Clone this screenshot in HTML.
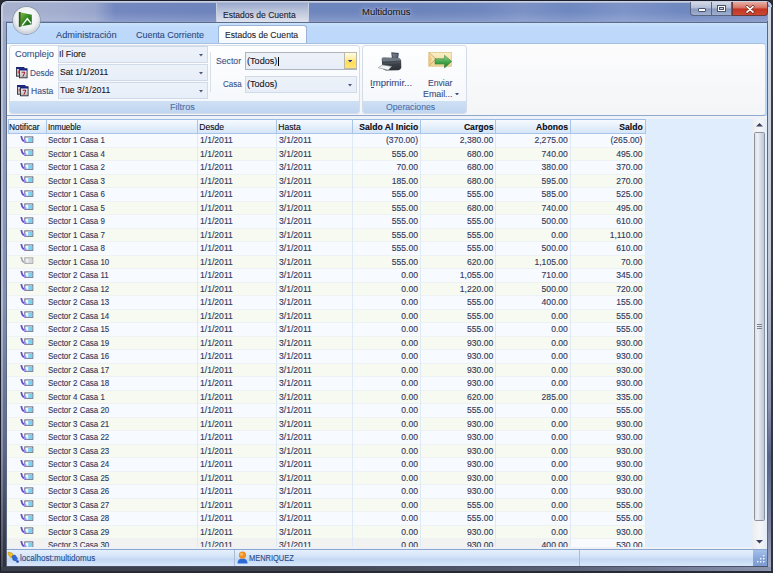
<!DOCTYPE html>
<html><head><meta charset="utf-8">
<style>
*{margin:0;padding:0;box-sizing:border-box}
html,body{width:773px;height:573px;overflow:hidden;background:#2c2e36}
body{position:relative;font-family:"Liberation Sans",sans-serif}
.a{position:absolute}
.t{-webkit-text-stroke:0.1px currentColor;position:absolute;white-space:nowrap;line-height:1;transform-origin:0 0}
.gt{-webkit-text-stroke:0.12px currentColor;position:absolute;white-space:nowrap;font-size:8.6px;color:#30385a;line-height:13.5px;height:13.5px}
.sx{transform:scaleX(0.922);transform-origin:0 0}
.r{text-align:right}
</style></head><body>

<div class="a" style="left:0;top:0;width:773px;height:573px;background:#1a1d2c;border-radius:7px 7px 0 0"></div>
<div class="a" style="left:1px;top:1px;width:771px;height:571px;border-radius:6px 6px 0 0;background:linear-gradient(180deg,#c8d0e2 0px,#bcc6dc 60px,#aebcd4 300px,#8890a8 450px,#5a5e6c 540px,#44474f 573px)"></div>
<div class="a" style="left:3px;top:3px;width:767px;height:568px;border-radius:5px 5px 0 0;background:linear-gradient(180deg,#a0acd0 0px,#98a6c8 40px,#8090b0 300px,#5a6488 450px,#383c48 540px,#2c2e36 573px)"></div>
<div class="a" style="left:3px;top:3px;width:767px;height:18px;border-radius:5px 5px 0 0;background:linear-gradient(90deg,#a8b2ce 0px,#a2acce 60px,#98a6cc 92px,#7488c0 112px,#6e84bc 200px,#6e86be 330px,#6c84bc 420px,#7088c0 480px,#7c92c6 520px,#6e88c0 565px,#7e94c8 620px,#6e88c0 680px,#7a8cc0 767px)"></div>
<div class="a" style="left:3px;top:2px;width:767px;height:1px;background:#aab4d0;opacity:0.7"></div>
<div class="a" style="left:6px;top:21px;width:762px;height:546px;background:#5c6884;border-top:1px solid #8e9ec8"></div>
<div class="a" style="left:771px;top:7px;width:2px;height:566px;background:linear-gradient(180deg,#3a3e50 0%,#30343e 100%)"></div>
<div class="a" style="left:768px;top:7px;width:3px;height:566px;background:linear-gradient(180deg,#d4d8e2 0px,#c4cad6 250px,#8a92ac 400px,#5a6488 450px,#7a84a0 520px,#a0a8c0 560px)"></div>
<div class="a" style="left:767px;top:21px;width:1px;height:546px;background:#5c6680"></div>
<div class="a" style="left:3px;top:12px;width:765px;height:9px;background:linear-gradient(180deg,rgba(200,210,235,0) 0%,rgba(200,210,235,0.25) 100%)"></div>
<div class="a" style="left:216px;top:3px;width:93px;height:19px;background:linear-gradient(180deg,#9aa8cc 0%,#bcc6dc 45%,#dde2ec 100%);border-left:1px solid #c8d0e0;border-right:1px solid #c8d0e0"></div>
<div class="t" style="left:223.12px;top:11px;font-size:8.8px;color:#1a2030;transform:scaleX(0.972);">Estados de Cuenta</div>
<div class="t" style="left:361.94px;top:7px;font-size:9.8px;color:#141620;transform:scaleX(0.969);text-shadow:0 0 5px rgba(230,236,250,0.8),0 0 2px rgba(230,236,250,0.6);">Multidomus</div>
<div class="a" style="left:690px;top:2px;width:42px;height:14px;border:1px solid #5a6480;border-top:none;border-radius:0 0 0 4px;background:linear-gradient(180deg,#d4dae6 0%,#b4c0d8 42%,#8a9ac0 55%,#a0b0d0 100%)"></div>
<div class="a" style="left:711px;top:2px;width:1px;height:13px;background:#5a6480"></div>
<div class="a" style="left:697.5px;top:8px;width:8.5px;height:3.6px;background:#fff;border:1px solid #4a5270;border-radius:1px"></div>
<div class="a" style="left:717px;top:5px;width:9px;height:7px;border:1px solid #4a5270;background:#fff"></div>
<div class="a" style="left:719px;top:7px;width:5px;height:3px;border:1px solid #4a5270;background:#c8d0e0"></div>
<div class="a" style="left:732px;top:2px;width:36px;height:14px;border:1px solid #6a3a3a;border-top:none;border-radius:0 0 4px 0;background:linear-gradient(180deg,#e8aca4 0%,#d87868 42%,#c43424 55%,#cc4a34 100%)"></div>
<svg class="a" style="left:745px;top:4.5px" width="10" height="9" viewBox="0 0 10 9"><path d="M2 1.6 L8 7.2 M8 1.6 L2 7.2" stroke="#5a2018" stroke-width="2.8" stroke-linecap="round"/><path d="M2 1.6 L8 7.2 M8 1.6 L2 7.2" stroke="#fff" stroke-width="1.7" stroke-linecap="round"/></svg>

<div class="a" style="left:7px;top:22px;width:760px;height:21px;background:linear-gradient(180deg,#cce4fc 0px,#c8e2fc 2px,#bed9fa 5px,#bcd8fa 100%)"></div>
<div class="a" style="left:6px;top:22px;width:762px;height:1px;background:#5e6a8a"></div>
<div class="a" style="left:217.5px;top:25px;width:89.5px;height:19px;border:1px solid #9ab4d8;border-bottom:none;border-radius:3px 3px 0 0;background:linear-gradient(180deg,#ffffff 0%,#f6f9fd 100%)"></div>
<div class="t" style="left:225.01px;top:31px;font-size:9.2px;color:#1e1e30;transform:scaleX(0.935);">Estados de Cuenta</div>
<div class="t" style="left:56.00px;top:30px;font-size:9.6px;color:#2c4a80;transform:scaleX(0.963);">Administración</div>
<div class="t" style="left:136.35px;top:30px;font-size:9.6px;color:#2c4a80;transform:scaleX(0.931);">Cuenta Corriente</div>
<div class="a" style="left:7px;top:43px;width:760px;height:74px;background:#bcd8fa"></div>
<div class="a" style="left:7px;top:43px;width:759px;height:73.3px;background:linear-gradient(180deg,#fcfcfd 0%,#f4f5f7 100%);border-top:1px solid #a8c0e0;border-right:1px solid #bcd2ee;border-bottom:1.5px solid #8fa8cc;border-radius:0 3px 3px 0"></div>
<div class="a" style="left:8.5px;top:44.5px;width:351px;height:69px;border:1px solid #d4dcea;border-radius:3px;background:linear-gradient(180deg,#fdfeff 0%,#f4f7fb 100%)"></div>
<div class="a" style="left:9.5px;top:100.5px;width:349px;height:12.5px;background:linear-gradient(180deg,#cfe0f4 0%,#c0d6f0 100%);border-radius:0 0 2px 2px"></div>
<div class="t" style="left:169.77px;top:103px;font-size:9.2px;color:#4a70aa;transform:scaleX(0.989);">Filtros</div>
<div class="a" style="left:362px;top:44.5px;width:105px;height:69px;border:1px solid #d4dcea;border-radius:3px;background:linear-gradient(180deg,#fdfeff 0%,#f4f7fb 100%)"></div>
<div class="a" style="left:363px;top:100.5px;width:103px;height:12.5px;background:linear-gradient(180deg,#cfe0f4 0%,#c0d6f0 100%);border-radius:0 0 2px 2px"></div>
<div class="t" style="left:386.31px;top:103px;font-size:9.2px;color:#4a70aa;transform:scaleX(0.943);">Operaciones</div>
<div class="t" style="left:15.04px;top:50px;font-size:9.2px;color:#3a5284;transform:scaleX(1.002);">Complejo</div>
<div class="t" style="left:30.04px;top:69px;font-size:9.2px;color:#3a5284;transform:scaleX(0.900);">Desde</div>
<div class="t" style="left:31.31px;top:87px;font-size:9.2px;color:#3a5284;transform:scaleX(0.932);">Hasta</div>
<svg class="a" style="left:16px;top:66.8px" width="12" height="12" viewBox="0 0 12 12">
<defs><linearGradient id="cg" x1="0" y1="0" x2="0" y2="1"><stop offset="0" stop-color="#ffffff"/><stop offset="1" stop-color="#b8b8b8"/></linearGradient></defs>
<rect x="0.5" y="0.5" width="7.5" height="8.7" fill="url(#cg)" stroke="#303038" stroke-width="0.9"/>
<rect x="0.5" y="0.2" width="7.5" height="2" fill="#14208a"/>
<path d="M2.2 3.5 L2.2 6.5" stroke="#c02020" stroke-width="1"/>
<rect x="3.5" y="1.8" width="7.6" height="9" fill="url(#cg)" stroke="#303038" stroke-width="0.9"/>
<rect x="3.5" y="1.5" width="7.6" height="2" fill="#14208a"/>
<path d="M5.6 5.2 L8.9 5.2 L6.9 9.6" stroke="#a01420" stroke-width="1" fill="none"/>
</svg>
<svg class="a" style="left:17.3px;top:85px" width="12" height="12" viewBox="0 0 12 12">
<defs><linearGradient id="cg" x1="0" y1="0" x2="0" y2="1"><stop offset="0" stop-color="#ffffff"/><stop offset="1" stop-color="#b8b8b8"/></linearGradient></defs>
<rect x="0.5" y="0.5" width="7.5" height="8.7" fill="url(#cg)" stroke="#303038" stroke-width="0.9"/>
<rect x="0.5" y="0.2" width="7.5" height="2" fill="#14208a"/>
<path d="M2.2 3.5 L2.2 6.5" stroke="#c02020" stroke-width="1"/>
<rect x="3.5" y="1.8" width="7.6" height="9" fill="url(#cg)" stroke="#303038" stroke-width="0.9"/>
<rect x="3.5" y="1.5" width="7.6" height="2" fill="#14208a"/>
<path d="M5.6 5.2 L8.9 5.2 L6.9 9.6" stroke="#a01420" stroke-width="1" fill="none"/>
</svg>
<div class="a" style="left:57.8px;top:46px;width:150.2px;height:17.2px;border:1px solid #d0dae8;background:linear-gradient(180deg,#edf2f9 0%,#e8eef8 100%)"></div><svg class="a" style="left:198.5px;top:54.1px" width="4" height="2.5" viewBox="0 0 4 2.5"><path d="M0 0 L4 0 L2 2.5 Z" fill="#4a5a7a"/></svg>
<div class="a" style="left:57.8px;top:64.2px;width:150.2px;height:17.2px;border:1px solid #d0dae8;background:linear-gradient(180deg,#edf2f9 0%,#e8eef8 100%)"></div><svg class="a" style="left:198.5px;top:72.3px" width="4" height="2.5" viewBox="0 0 4 2.5"><path d="M0 0 L4 0 L2 2.5 Z" fill="#4a5a7a"/></svg>
<div class="a" style="left:57.8px;top:82.3px;width:150.2px;height:17.2px;border:1px solid #d0dae8;background:linear-gradient(180deg,#edf2f9 0%,#e8eef8 100%)"></div><svg class="a" style="left:198.5px;top:90.39999999999999px" width="4" height="2.5" viewBox="0 0 4 2.5"><path d="M0 0 L4 0 L2 2.5 Z" fill="#4a5a7a"/></svg>
<div class="t" style="left:59.30px;top:50px;font-size:9.2px;color:#16161e;transform:scaleX(0.960);">Il Fiore</div>
<div class="t" style="left:59.71px;top:68px;font-size:9.2px;color:#16161e;transform:scaleX(0.938);">Sat 1/1/2011</div>
<div class="t" style="left:60.43px;top:86px;font-size:9.2px;color:#16161e;transform:scaleX(0.949);">Tue 3/1/2011</div>
<div class="a" style="left:210px;top:52px;width:1px;height:40px;background:#d8e0ea"></div>
<div class="t" style="left:216.41px;top:57px;font-size:9.2px;color:#3a5284;transform:scaleX(0.943);">Sector</div>
<div class="t" style="left:222.70px;top:80px;font-size:9.2px;color:#3a5284;transform:scaleX(0.866);">Casa</div>
<div class="a" style="left:245.3px;top:51.8px;width:112px;height:17.9px;border:1px solid #b0b4bc;background:linear-gradient(180deg,#edf2f9 0%,#e8eef8 100%)"></div><div class="a" style="left:344.0px;top:52.3px;width:12.8px;height:16.9px;border:1px solid #bcb8a8;background:linear-gradient(180deg,#fffce6 0%,#fff0b0 35%,#ffdc58 60%,#ffe47a 100%)"></div><svg class="a" style="left:348.0px;top:59.85px" width="4.2" height="2.6" viewBox="0 0 4.2 2.6"><path d="M0 0 L4.2 0 L2.1 2.6 Z" fill="#2a3a8a"/></svg>
<div class="a" style="left:245.3px;top:75.7px;width:112px;height:17.7px;border:1px solid #d0dae8;background:linear-gradient(180deg,#edf2f9 0%,#e8eef8 100%)"></div><svg class="a" style="left:347.8px;top:84.05px" width="4" height="2.5" viewBox="0 0 4 2.5"><path d="M0 0 L4 0 L2 2.5 Z" fill="#4a5a7a"/></svg>
<div class="t" style="left:247.25px;top:57px;font-size:9.2px;color:#16161e;transform:scaleX(0.992);">(Todos)</div>
<div class="t" style="left:247.25px;top:80px;font-size:9.2px;color:#16161e;transform:scaleX(0.989);">(Todos)</div>
<div class="a" style="left:278.1px;top:56.6px;width:0.9px;height:9.1px;background:#000"></div>
<svg class="a" style="left:374px;top:48px" width="30" height="26" viewBox="0 0 30 26">
<defs><linearGradient id="pb" x1="0" y1="0" x2="0" y2="1"><stop offset="0" stop-color="#50585f"/><stop offset="0.5" stop-color="#3a4048"/><stop offset="1" stop-color="#2c3036"/></linearGradient>
<linearGradient id="ph" x1="0" y1="0" x2="1" y2="1"><stop offset="0" stop-color="#7a8898"/><stop offset="1" stop-color="#4a5664"/></linearGradient></defs>
<path d="M17.3 4.3 L24.8 5 L24 12 L18 11.5 Z" fill="#3e4650"/>
<path d="M18.3 5.4 L23.8 6 L23.2 10.8 L18.9 10.4 Z" fill="url(#ph)"/>
<path d="M7.7 10.8 Q8 9.7 9.6 9.6 L24 9.9 Q26.6 10.3 27.1 12.6 L27.3 19.5 Q27 21.8 24.5 22.3 L12 22.4 Q9 22.1 8.3 19 Z" fill="url(#pb)"/>
<path d="M7.8 10.9 Q8.1 9.8 9.6 9.7 L24 10 Q26.4 10.3 26.9 12.4 L9 13.6 Z" fill="#6e7782"/>
<path d="M9.5 15.5 L26 14.6" stroke="#58606a" stroke-width="0.6"/>
<path d="M4.3 19.7 L8.6 16.9 L17.6 18.4 L14.2 22.2 Z" fill="#f2f4f6" stroke="#8a9098" stroke-width="0.6"/>
</svg>
<div class="t" style="left:370.04px;top:79px;font-size:9.2px;color:#3a4c80;transform:scaleX(1.044);">Imprimir...</div>
<div class="a" style="left:370.5px;top:86.5px;width:3px;height:0.8px;background:#3a4c80"></div>
<svg class="a" style="left:424px;top:48px" width="30" height="22" viewBox="0 0 30 22">
<defs><linearGradient id="ev" x1="0" y1="0" x2="0" y2="1"><stop offset="0" stop-color="#faf0c8"/><stop offset="1" stop-color="#ecd490"/></linearGradient>
<linearGradient id="ar" x1="0" y1="0" x2="0" y2="1"><stop offset="0" stop-color="#9ad890"/><stop offset="0.5" stop-color="#4aa850"/><stop offset="1" stop-color="#1e7a2e"/></linearGradient></defs>
<rect x="4.8" y="4.3" width="22.6" height="13.9" fill="url(#ev)" stroke="#d8b870" stroke-width="0.6"/>
<path d="M4.8 4.6 L13 12 M4.8 17.8 L11 12" stroke="#c89a50" stroke-width="0.8" fill="none"/>
<path d="M4.8 5 L8 11 L4.8 17" fill="#f0b060" opacity="0.6"/>
<path d="M11 10.7 L20.5 10.7 L20.5 7.3 L27.7 13.4 L20.5 20 L20.5 16.1 L11 16.1 Z" fill="url(#ar)" stroke="#2a7a34" stroke-width="0.5"/>
</svg>
<div class="t" style="left:428.41px;top:79px;font-size:9.2px;color:#3a4c80;transform:scaleX(0.938);">Enviar</div>
<div class="t" style="left:423.29px;top:90px;font-size:9.2px;color:#3a4c80;transform:scaleX(0.963);">Email...</div>
<svg class="a" style="left:455.3px;top:92.8px" width="4" height="2.5" viewBox="0 0 4 2.5"><path d="M0 0 L4 0 L2 2.5 Z" fill="#3a4c80"/></svg>
<div class="a" style="left:7px;top:116.3px;width:760px;height:433px;background:#e0edfc"></div>
<div class="a" style="left:7px;top:116.3px;width:760px;height:2.5px;background:#eef3fa"></div>
<div class="a" style="left:7.5px;top:118.8px;width:637.5px;height:15px;background:linear-gradient(180deg,#f6faff 0%,#e8f1fb 45%,#d6e6f8 100%);border-top:1px solid #9cbce6;border-bottom:1px solid #a8c6ea"></div>
<div class="a" style="left:45.7px;top:119px;width:1px;height:14.5px;background:#a8c4e8"></div>
<div class="a" style="left:197.0px;top:119px;width:1px;height:14.5px;background:#a8c4e8"></div>
<div class="a" style="left:276.0px;top:119px;width:1px;height:14.5px;background:#a8c4e8"></div>
<div class="a" style="left:352.0px;top:119px;width:1px;height:14.5px;background:#a8c4e8"></div>
<div class="a" style="left:420.0px;top:119px;width:1px;height:14.5px;background:#a8c4e8"></div>
<div class="a" style="left:495.3px;top:119px;width:1px;height:14.5px;background:#a8c4e8"></div>
<div class="a" style="left:569.9px;top:119px;width:1px;height:14.5px;background:#a8c4e8"></div>
<div class="a" style="left:644.5px;top:119px;width:1px;height:14.5px;background:#a8c4e8"></div>
<div class="a" style="left:7.5px;top:119px;width:1px;height:15px;background:#a8c4e8"></div>
<div class="gt" style="left:9.3px;top:121px;color:#0c0c14;transform:scaleX(0.97);transform-origin:0 0">Notificar</div>
<div class="gt" style="left:48.0px;top:121px;color:#0c0c14;transform:scaleX(0.935);transform-origin:0 0">Inmueble</div>
<div class="gt" style="left:199.3px;top:121px;color:#0c0c14;transform:scaleX(1.0);transform-origin:0 0">Desde</div>
<div class="gt" style="left:278.3px;top:121px;color:#0c0c14;transform:scaleX(1.0);transform-origin:0 0">Hasta</div>
<div class="gt r" style="left:352.5px;width:65.7px;top:121px;font-weight:bold;color:#0c0c14">Saldo Al Inicio</div>
<div class="gt r" style="left:420.5px;width:73.00000000000001px;top:121px;font-weight:bold;color:#0c0c14">Cargos</div>
<div class="gt r" style="left:495.8px;width:72.29999999999997px;top:121px;font-weight:bold;color:#0c0c14">Abonos</div>
<div class="gt r" style="left:570.4px;width:72.30000000000003px;top:121px;font-weight:bold;color:#0c0c14">Saldo</div>
<div class="a" style="left:7px;top:134.0px;width:638px;height:13.5px;background:#f7fafe;border-bottom:1px solid #eff2f5"></div>
<div class="a" style="left:7px;top:147.5px;width:638px;height:13.5px;background:#f6faf1;border-bottom:1px solid #eff2f5"></div>
<div class="a" style="left:7px;top:161.0px;width:638px;height:13.5px;background:#f7fafe;border-bottom:1px solid #eff2f5"></div>
<div class="a" style="left:7px;top:174.5px;width:638px;height:13.5px;background:#f6faf1;border-bottom:1px solid #eff2f5"></div>
<div class="a" style="left:7px;top:188.0px;width:638px;height:13.5px;background:#f7fafe;border-bottom:1px solid #eff2f5"></div>
<div class="a" style="left:7px;top:201.5px;width:638px;height:13.5px;background:#f6faf1;border-bottom:1px solid #eff2f5"></div>
<div class="a" style="left:7px;top:215.0px;width:638px;height:13.5px;background:#f7fafe;border-bottom:1px solid #eff2f5"></div>
<div class="a" style="left:7px;top:228.5px;width:638px;height:13.5px;background:#f6faf1;border-bottom:1px solid #eff2f5"></div>
<div class="a" style="left:7px;top:242.0px;width:638px;height:13.5px;background:#f7fafe;border-bottom:1px solid #eff2f5"></div>
<div class="a" style="left:7px;top:255.5px;width:638px;height:13.5px;background:#f6faf1;border-bottom:1px solid #eff2f5"></div>
<div class="a" style="left:7px;top:269.0px;width:638px;height:13.5px;background:#f7fafe;border-bottom:1px solid #eff2f5"></div>
<div class="a" style="left:7px;top:282.5px;width:638px;height:13.5px;background:#f6faf1;border-bottom:1px solid #eff2f5"></div>
<div class="a" style="left:7px;top:296.0px;width:638px;height:13.5px;background:#f7fafe;border-bottom:1px solid #eff2f5"></div>
<div class="a" style="left:7px;top:309.5px;width:638px;height:13.5px;background:#f6faf1;border-bottom:1px solid #eff2f5"></div>
<div class="a" style="left:7px;top:323.0px;width:638px;height:13.5px;background:#f7fafe;border-bottom:1px solid #eff2f5"></div>
<div class="a" style="left:7px;top:336.5px;width:638px;height:13.5px;background:#f6faf1;border-bottom:1px solid #eff2f5"></div>
<div class="a" style="left:7px;top:350.0px;width:638px;height:13.5px;background:#f7fafe;border-bottom:1px solid #eff2f5"></div>
<div class="a" style="left:7px;top:363.5px;width:638px;height:13.5px;background:#f6faf1;border-bottom:1px solid #eff2f5"></div>
<div class="a" style="left:7px;top:377.0px;width:638px;height:13.5px;background:#f7fafe;border-bottom:1px solid #eff2f5"></div>
<div class="a" style="left:7px;top:390.5px;width:638px;height:13.5px;background:#f6faf1;border-bottom:1px solid #eff2f5"></div>
<div class="a" style="left:7px;top:404.0px;width:638px;height:13.5px;background:#f7fafe;border-bottom:1px solid #eff2f5"></div>
<div class="a" style="left:7px;top:417.5px;width:638px;height:13.5px;background:#f6faf1;border-bottom:1px solid #eff2f5"></div>
<div class="a" style="left:7px;top:431.0px;width:638px;height:13.5px;background:#f7fafe;border-bottom:1px solid #eff2f5"></div>
<div class="a" style="left:7px;top:444.5px;width:638px;height:13.5px;background:#f6faf1;border-bottom:1px solid #eff2f5"></div>
<div class="a" style="left:7px;top:458.0px;width:638px;height:13.5px;background:#f7fafe;border-bottom:1px solid #eff2f5"></div>
<div class="a" style="left:7px;top:471.5px;width:638px;height:13.5px;background:#f6faf1;border-bottom:1px solid #eff2f5"></div>
<div class="a" style="left:7px;top:485.0px;width:638px;height:13.5px;background:#f7fafe;border-bottom:1px solid #eff2f5"></div>
<div class="a" style="left:7px;top:498.5px;width:638px;height:13.5px;background:#f6faf1;border-bottom:1px solid #eff2f5"></div>
<div class="a" style="left:7px;top:512.0px;width:638px;height:13.5px;background:#f7fafe;border-bottom:1px solid #eff2f5"></div>
<div class="a" style="left:7px;top:525.5px;width:638px;height:13.5px;background:#f6faf1;border-bottom:1px solid #eff2f5"></div>
<div class="a" style="left:7px;top:539.0px;width:638px;height:13.5px;background:#f2f2f0;border-bottom:1px solid #eff2f5"></div>
<div class="a" style="left:570.4px;top:539.0px;width:74.60000000000002px;height:13.5px;background:#f8fafd"></div>
<div class="a" style="left:45.7px;top:134px;width:1px;height:415px;background:#eef3f8"></div>
<div class="a" style="left:197.0px;top:134px;width:1px;height:415px;background:#e0eaf6"></div>
<div class="a" style="left:276.0px;top:134px;width:1px;height:415px;background:#e0eaf6"></div>
<div class="a" style="left:352.0px;top:134px;width:1px;height:415px;background:#e0eaf6"></div>
<div class="a" style="left:420.0px;top:134px;width:1px;height:415px;background:#e0eaf6"></div>
<div class="a" style="left:495.3px;top:134px;width:1px;height:415px;background:#e0eaf6"></div>
<div class="a" style="left:569.9px;top:134px;width:1px;height:415px;background:#e0eaf6"></div>
<div class="a" style="left:644.5px;top:134px;width:1px;height:415px;background:#e0eaf6"></div>
<svg class="a" style="left:19.0px;top:135.9px" width="15" height="8" viewBox="0 0 15 8">
<rect x="5.8" y="0.9" width="8" height="5.4" fill="#f0f8ff" stroke="#646880" stroke-width="1"/>
<rect x="9" y="2" width="4.3" height="3.8" fill="#78d0ee"/>
<path d="M7 5.5 L9.5 2.5 M8 5.8 L10.5 3" stroke="#ffffff" stroke-width="0.5" opacity="0.7"/>
<path d="M2.2 0 L3.2 3.4 Q3.8 5.0 6.0 5.3" stroke="#6252c8" stroke-width="1.8" fill="none"/>
<path d="M5.0 3.2 L7.8 5.1 L5.0 7.2 Z" fill="#9c8cf0"/>
</svg>
<div class="gt sx" style="left:47.6px;top:134.0px">Sector 1 Casa 1</div>
<div class="gt" style="left:200.0px;top:134.0px">1/1/2011</div>
<div class="gt" style="left:279.0px;top:134.0px">3/1/2011</div>
<div class="gt r" style="left:352.5px;width:65.5px;top:134.0px">(370.00)</div>
<div class="gt r" style="left:420.5px;width:72.80000000000001px;top:134.0px">2,380.00</div>
<div class="gt r" style="left:495.8px;width:72.09999999999997px;top:134.0px">2,275.00</div>
<div class="gt r" style="left:570.4px;width:72.10000000000002px;top:134.0px">(265.00)</div>
<svg class="a" style="left:19.0px;top:149.4px" width="15" height="8" viewBox="0 0 15 8">
<rect x="5.8" y="0.9" width="8" height="5.4" fill="#f0f8ff" stroke="#646880" stroke-width="1"/>
<rect x="9" y="2" width="4.3" height="3.8" fill="#78d0ee"/>
<path d="M7 5.5 L9.5 2.5 M8 5.8 L10.5 3" stroke="#ffffff" stroke-width="0.5" opacity="0.7"/>
<path d="M2.2 0 L3.2 3.4 Q3.8 5.0 6.0 5.3" stroke="#6252c8" stroke-width="1.8" fill="none"/>
<path d="M5.0 3.2 L7.8 5.1 L5.0 7.2 Z" fill="#9c8cf0"/>
</svg>
<div class="gt sx" style="left:47.6px;top:147.5px">Sector 1 Casa 4</div>
<div class="gt" style="left:200.0px;top:147.5px">1/1/2011</div>
<div class="gt" style="left:279.0px;top:147.5px">3/1/2011</div>
<div class="gt r" style="left:352.5px;width:65.5px;top:147.5px">555.00</div>
<div class="gt r" style="left:420.5px;width:72.80000000000001px;top:147.5px">680.00</div>
<div class="gt r" style="left:495.8px;width:72.09999999999997px;top:147.5px">740.00</div>
<div class="gt r" style="left:570.4px;width:72.10000000000002px;top:147.5px">495.00</div>
<svg class="a" style="left:19.0px;top:162.9px" width="15" height="8" viewBox="0 0 15 8">
<rect x="5.8" y="0.9" width="8" height="5.4" fill="#f0f8ff" stroke="#646880" stroke-width="1"/>
<rect x="9" y="2" width="4.3" height="3.8" fill="#78d0ee"/>
<path d="M7 5.5 L9.5 2.5 M8 5.8 L10.5 3" stroke="#ffffff" stroke-width="0.5" opacity="0.7"/>
<path d="M2.2 0 L3.2 3.4 Q3.8 5.0 6.0 5.3" stroke="#6252c8" stroke-width="1.8" fill="none"/>
<path d="M5.0 3.2 L7.8 5.1 L5.0 7.2 Z" fill="#9c8cf0"/>
</svg>
<div class="gt sx" style="left:47.6px;top:161.0px">Sector 1 Casa 2</div>
<div class="gt" style="left:200.0px;top:161.0px">1/1/2011</div>
<div class="gt" style="left:279.0px;top:161.0px">3/1/2011</div>
<div class="gt r" style="left:352.5px;width:65.5px;top:161.0px">70.00</div>
<div class="gt r" style="left:420.5px;width:72.80000000000001px;top:161.0px">680.00</div>
<div class="gt r" style="left:495.8px;width:72.09999999999997px;top:161.0px">380.00</div>
<div class="gt r" style="left:570.4px;width:72.10000000000002px;top:161.0px">370.00</div>
<svg class="a" style="left:19.0px;top:176.4px" width="15" height="8" viewBox="0 0 15 8">
<rect x="5.8" y="0.9" width="8" height="5.4" fill="#f0f8ff" stroke="#646880" stroke-width="1"/>
<rect x="9" y="2" width="4.3" height="3.8" fill="#78d0ee"/>
<path d="M7 5.5 L9.5 2.5 M8 5.8 L10.5 3" stroke="#ffffff" stroke-width="0.5" opacity="0.7"/>
<path d="M2.2 0 L3.2 3.4 Q3.8 5.0 6.0 5.3" stroke="#6252c8" stroke-width="1.8" fill="none"/>
<path d="M5.0 3.2 L7.8 5.1 L5.0 7.2 Z" fill="#9c8cf0"/>
</svg>
<div class="gt sx" style="left:47.6px;top:174.5px">Sector 1 Casa 3</div>
<div class="gt" style="left:200.0px;top:174.5px">1/1/2011</div>
<div class="gt" style="left:279.0px;top:174.5px">3/1/2011</div>
<div class="gt r" style="left:352.5px;width:65.5px;top:174.5px">185.00</div>
<div class="gt r" style="left:420.5px;width:72.80000000000001px;top:174.5px">680.00</div>
<div class="gt r" style="left:495.8px;width:72.09999999999997px;top:174.5px">595.00</div>
<div class="gt r" style="left:570.4px;width:72.10000000000002px;top:174.5px">270.00</div>
<svg class="a" style="left:19.0px;top:189.9px" width="15" height="8" viewBox="0 0 15 8">
<rect x="5.8" y="0.9" width="8" height="5.4" fill="#f0f8ff" stroke="#646880" stroke-width="1"/>
<rect x="9" y="2" width="4.3" height="3.8" fill="#78d0ee"/>
<path d="M7 5.5 L9.5 2.5 M8 5.8 L10.5 3" stroke="#ffffff" stroke-width="0.5" opacity="0.7"/>
<path d="M2.2 0 L3.2 3.4 Q3.8 5.0 6.0 5.3" stroke="#6252c8" stroke-width="1.8" fill="none"/>
<path d="M5.0 3.2 L7.8 5.1 L5.0 7.2 Z" fill="#9c8cf0"/>
</svg>
<div class="gt sx" style="left:47.6px;top:188.0px">Sector 1 Casa 6</div>
<div class="gt" style="left:200.0px;top:188.0px">1/1/2011</div>
<div class="gt" style="left:279.0px;top:188.0px">3/1/2011</div>
<div class="gt r" style="left:352.5px;width:65.5px;top:188.0px">555.00</div>
<div class="gt r" style="left:420.5px;width:72.80000000000001px;top:188.0px">555.00</div>
<div class="gt r" style="left:495.8px;width:72.09999999999997px;top:188.0px">585.00</div>
<div class="gt r" style="left:570.4px;width:72.10000000000002px;top:188.0px">525.00</div>
<svg class="a" style="left:19.0px;top:203.4px" width="15" height="8" viewBox="0 0 15 8">
<rect x="5.8" y="0.9" width="8" height="5.4" fill="#f0f8ff" stroke="#646880" stroke-width="1"/>
<rect x="9" y="2" width="4.3" height="3.8" fill="#78d0ee"/>
<path d="M7 5.5 L9.5 2.5 M8 5.8 L10.5 3" stroke="#ffffff" stroke-width="0.5" opacity="0.7"/>
<path d="M2.2 0 L3.2 3.4 Q3.8 5.0 6.0 5.3" stroke="#6252c8" stroke-width="1.8" fill="none"/>
<path d="M5.0 3.2 L7.8 5.1 L5.0 7.2 Z" fill="#9c8cf0"/>
</svg>
<div class="gt sx" style="left:47.6px;top:201.5px">Sector 1 Casa 5</div>
<div class="gt" style="left:200.0px;top:201.5px">1/1/2011</div>
<div class="gt" style="left:279.0px;top:201.5px">3/1/2011</div>
<div class="gt r" style="left:352.5px;width:65.5px;top:201.5px">555.00</div>
<div class="gt r" style="left:420.5px;width:72.80000000000001px;top:201.5px">680.00</div>
<div class="gt r" style="left:495.8px;width:72.09999999999997px;top:201.5px">740.00</div>
<div class="gt r" style="left:570.4px;width:72.10000000000002px;top:201.5px">495.00</div>
<svg class="a" style="left:19.0px;top:216.9px" width="15" height="8" viewBox="0 0 15 8">
<rect x="5.8" y="0.9" width="8" height="5.4" fill="#f0f8ff" stroke="#646880" stroke-width="1"/>
<rect x="9" y="2" width="4.3" height="3.8" fill="#78d0ee"/>
<path d="M7 5.5 L9.5 2.5 M8 5.8 L10.5 3" stroke="#ffffff" stroke-width="0.5" opacity="0.7"/>
<path d="M2.2 0 L3.2 3.4 Q3.8 5.0 6.0 5.3" stroke="#6252c8" stroke-width="1.8" fill="none"/>
<path d="M5.0 3.2 L7.8 5.1 L5.0 7.2 Z" fill="#9c8cf0"/>
</svg>
<div class="gt sx" style="left:47.6px;top:215.0px">Sector 1 Casa 9</div>
<div class="gt" style="left:200.0px;top:215.0px">1/1/2011</div>
<div class="gt" style="left:279.0px;top:215.0px">3/1/2011</div>
<div class="gt r" style="left:352.5px;width:65.5px;top:215.0px">555.00</div>
<div class="gt r" style="left:420.5px;width:72.80000000000001px;top:215.0px">555.00</div>
<div class="gt r" style="left:495.8px;width:72.09999999999997px;top:215.0px">500.00</div>
<div class="gt r" style="left:570.4px;width:72.10000000000002px;top:215.0px">610.00</div>
<svg class="a" style="left:19.0px;top:230.4px" width="15" height="8" viewBox="0 0 15 8">
<rect x="5.8" y="0.9" width="8" height="5.4" fill="#f0f8ff" stroke="#646880" stroke-width="1"/>
<rect x="9" y="2" width="4.3" height="3.8" fill="#78d0ee"/>
<path d="M7 5.5 L9.5 2.5 M8 5.8 L10.5 3" stroke="#ffffff" stroke-width="0.5" opacity="0.7"/>
<path d="M2.2 0 L3.2 3.4 Q3.8 5.0 6.0 5.3" stroke="#6252c8" stroke-width="1.8" fill="none"/>
<path d="M5.0 3.2 L7.8 5.1 L5.0 7.2 Z" fill="#9c8cf0"/>
</svg>
<div class="gt sx" style="left:47.6px;top:228.5px">Sector 1 Casa 7</div>
<div class="gt" style="left:200.0px;top:228.5px">1/1/2011</div>
<div class="gt" style="left:279.0px;top:228.5px">3/1/2011</div>
<div class="gt r" style="left:352.5px;width:65.5px;top:228.5px">555.00</div>
<div class="gt r" style="left:420.5px;width:72.80000000000001px;top:228.5px">555.00</div>
<div class="gt r" style="left:495.8px;width:72.09999999999997px;top:228.5px">0.00</div>
<div class="gt r" style="left:570.4px;width:72.10000000000002px;top:228.5px">1,110.00</div>
<svg class="a" style="left:19.0px;top:243.9px" width="15" height="8" viewBox="0 0 15 8">
<rect x="5.8" y="0.9" width="8" height="5.4" fill="#f0f8ff" stroke="#646880" stroke-width="1"/>
<rect x="9" y="2" width="4.3" height="3.8" fill="#78d0ee"/>
<path d="M7 5.5 L9.5 2.5 M8 5.8 L10.5 3" stroke="#ffffff" stroke-width="0.5" opacity="0.7"/>
<path d="M2.2 0 L3.2 3.4 Q3.8 5.0 6.0 5.3" stroke="#6252c8" stroke-width="1.8" fill="none"/>
<path d="M5.0 3.2 L7.8 5.1 L5.0 7.2 Z" fill="#9c8cf0"/>
</svg>
<div class="gt sx" style="left:47.6px;top:242.0px">Sector 1 Casa 8</div>
<div class="gt" style="left:200.0px;top:242.0px">1/1/2011</div>
<div class="gt" style="left:279.0px;top:242.0px">3/1/2011</div>
<div class="gt r" style="left:352.5px;width:65.5px;top:242.0px">555.00</div>
<div class="gt r" style="left:420.5px;width:72.80000000000001px;top:242.0px">555.00</div>
<div class="gt r" style="left:495.8px;width:72.09999999999997px;top:242.0px">500.00</div>
<div class="gt r" style="left:570.4px;width:72.10000000000002px;top:242.0px">610.00</div>
<svg class="a" style="left:19.0px;top:257.4px" width="15" height="8" viewBox="0 0 15 8">
<rect x="5.8" y="0.9" width="8" height="5.4" fill="#f2f2f2" stroke="#a0a0a8" stroke-width="1"/>
<rect x="9" y="2" width="4.3" height="3.8" fill="#d8d8d8"/>
<path d="M7 5.5 L9.5 2.5 M8 5.8 L10.5 3" stroke="#ffffff" stroke-width="0.5" opacity="0.7"/>
<path d="M2.2 0 L3.2 3.4 Q3.8 5.0 6.0 5.3" stroke="#a8a8b0" stroke-width="1.8" fill="none"/>
<path d="M5.0 3.2 L7.8 5.1 L5.0 7.2 Z" fill="#c4c4cc"/>
</svg>
<div class="gt sx" style="left:47.6px;top:255.5px">Sector 1 Casa 10</div>
<div class="gt" style="left:200.0px;top:255.5px">1/1/2011</div>
<div class="gt" style="left:279.0px;top:255.5px">3/1/2011</div>
<div class="gt r" style="left:352.5px;width:65.5px;top:255.5px">555.00</div>
<div class="gt r" style="left:420.5px;width:72.80000000000001px;top:255.5px">620.00</div>
<div class="gt r" style="left:495.8px;width:72.09999999999997px;top:255.5px">1,105.00</div>
<div class="gt r" style="left:570.4px;width:72.10000000000002px;top:255.5px">70.00</div>
<svg class="a" style="left:19.0px;top:270.9px" width="15" height="8" viewBox="0 0 15 8">
<rect x="5.8" y="0.9" width="8" height="5.4" fill="#f0f8ff" stroke="#646880" stroke-width="1"/>
<rect x="9" y="2" width="4.3" height="3.8" fill="#78d0ee"/>
<path d="M7 5.5 L9.5 2.5 M8 5.8 L10.5 3" stroke="#ffffff" stroke-width="0.5" opacity="0.7"/>
<path d="M2.2 0 L3.2 3.4 Q3.8 5.0 6.0 5.3" stroke="#6252c8" stroke-width="1.8" fill="none"/>
<path d="M5.0 3.2 L7.8 5.1 L5.0 7.2 Z" fill="#9c8cf0"/>
</svg>
<div class="gt sx" style="left:47.6px;top:269.0px">Sector 2 Casa 11</div>
<div class="gt" style="left:200.0px;top:269.0px">1/1/2011</div>
<div class="gt" style="left:279.0px;top:269.0px">3/1/2011</div>
<div class="gt r" style="left:352.5px;width:65.5px;top:269.0px">0.00</div>
<div class="gt r" style="left:420.5px;width:72.80000000000001px;top:269.0px">1,055.00</div>
<div class="gt r" style="left:495.8px;width:72.09999999999997px;top:269.0px">710.00</div>
<div class="gt r" style="left:570.4px;width:72.10000000000002px;top:269.0px">345.00</div>
<svg class="a" style="left:19.0px;top:284.4px" width="15" height="8" viewBox="0 0 15 8">
<rect x="5.8" y="0.9" width="8" height="5.4" fill="#f0f8ff" stroke="#646880" stroke-width="1"/>
<rect x="9" y="2" width="4.3" height="3.8" fill="#78d0ee"/>
<path d="M7 5.5 L9.5 2.5 M8 5.8 L10.5 3" stroke="#ffffff" stroke-width="0.5" opacity="0.7"/>
<path d="M2.2 0 L3.2 3.4 Q3.8 5.0 6.0 5.3" stroke="#6252c8" stroke-width="1.8" fill="none"/>
<path d="M5.0 3.2 L7.8 5.1 L5.0 7.2 Z" fill="#9c8cf0"/>
</svg>
<div class="gt sx" style="left:47.6px;top:282.5px">Sector 2 Casa 12</div>
<div class="gt" style="left:200.0px;top:282.5px">1/1/2011</div>
<div class="gt" style="left:279.0px;top:282.5px">3/1/2011</div>
<div class="gt r" style="left:352.5px;width:65.5px;top:282.5px">0.00</div>
<div class="gt r" style="left:420.5px;width:72.80000000000001px;top:282.5px">1,220.00</div>
<div class="gt r" style="left:495.8px;width:72.09999999999997px;top:282.5px">500.00</div>
<div class="gt r" style="left:570.4px;width:72.10000000000002px;top:282.5px">720.00</div>
<svg class="a" style="left:19.0px;top:297.9px" width="15" height="8" viewBox="0 0 15 8">
<rect x="5.8" y="0.9" width="8" height="5.4" fill="#f0f8ff" stroke="#646880" stroke-width="1"/>
<rect x="9" y="2" width="4.3" height="3.8" fill="#78d0ee"/>
<path d="M7 5.5 L9.5 2.5 M8 5.8 L10.5 3" stroke="#ffffff" stroke-width="0.5" opacity="0.7"/>
<path d="M2.2 0 L3.2 3.4 Q3.8 5.0 6.0 5.3" stroke="#6252c8" stroke-width="1.8" fill="none"/>
<path d="M5.0 3.2 L7.8 5.1 L5.0 7.2 Z" fill="#9c8cf0"/>
</svg>
<div class="gt sx" style="left:47.6px;top:296.0px">Sector 2 Casa 13</div>
<div class="gt" style="left:200.0px;top:296.0px">1/1/2011</div>
<div class="gt" style="left:279.0px;top:296.0px">3/1/2011</div>
<div class="gt r" style="left:352.5px;width:65.5px;top:296.0px">0.00</div>
<div class="gt r" style="left:420.5px;width:72.80000000000001px;top:296.0px">555.00</div>
<div class="gt r" style="left:495.8px;width:72.09999999999997px;top:296.0px">400.00</div>
<div class="gt r" style="left:570.4px;width:72.10000000000002px;top:296.0px">155.00</div>
<svg class="a" style="left:19.0px;top:311.4px" width="15" height="8" viewBox="0 0 15 8">
<rect x="5.8" y="0.9" width="8" height="5.4" fill="#f0f8ff" stroke="#646880" stroke-width="1"/>
<rect x="9" y="2" width="4.3" height="3.8" fill="#78d0ee"/>
<path d="M7 5.5 L9.5 2.5 M8 5.8 L10.5 3" stroke="#ffffff" stroke-width="0.5" opacity="0.7"/>
<path d="M2.2 0 L3.2 3.4 Q3.8 5.0 6.0 5.3" stroke="#6252c8" stroke-width="1.8" fill="none"/>
<path d="M5.0 3.2 L7.8 5.1 L5.0 7.2 Z" fill="#9c8cf0"/>
</svg>
<div class="gt sx" style="left:47.6px;top:309.5px">Sector 2 Casa 14</div>
<div class="gt" style="left:200.0px;top:309.5px">1/1/2011</div>
<div class="gt" style="left:279.0px;top:309.5px">3/1/2011</div>
<div class="gt r" style="left:352.5px;width:65.5px;top:309.5px">0.00</div>
<div class="gt r" style="left:420.5px;width:72.80000000000001px;top:309.5px">555.00</div>
<div class="gt r" style="left:495.8px;width:72.09999999999997px;top:309.5px">0.00</div>
<div class="gt r" style="left:570.4px;width:72.10000000000002px;top:309.5px">555.00</div>
<svg class="a" style="left:19.0px;top:324.9px" width="15" height="8" viewBox="0 0 15 8">
<rect x="5.8" y="0.9" width="8" height="5.4" fill="#f0f8ff" stroke="#646880" stroke-width="1"/>
<rect x="9" y="2" width="4.3" height="3.8" fill="#78d0ee"/>
<path d="M7 5.5 L9.5 2.5 M8 5.8 L10.5 3" stroke="#ffffff" stroke-width="0.5" opacity="0.7"/>
<path d="M2.2 0 L3.2 3.4 Q3.8 5.0 6.0 5.3" stroke="#6252c8" stroke-width="1.8" fill="none"/>
<path d="M5.0 3.2 L7.8 5.1 L5.0 7.2 Z" fill="#9c8cf0"/>
</svg>
<div class="gt sx" style="left:47.6px;top:323.0px">Sector 2 Casa 15</div>
<div class="gt" style="left:200.0px;top:323.0px">1/1/2011</div>
<div class="gt" style="left:279.0px;top:323.0px">3/1/2011</div>
<div class="gt r" style="left:352.5px;width:65.5px;top:323.0px">0.00</div>
<div class="gt r" style="left:420.5px;width:72.80000000000001px;top:323.0px">555.00</div>
<div class="gt r" style="left:495.8px;width:72.09999999999997px;top:323.0px">0.00</div>
<div class="gt r" style="left:570.4px;width:72.10000000000002px;top:323.0px">555.00</div>
<svg class="a" style="left:19.0px;top:338.4px" width="15" height="8" viewBox="0 0 15 8">
<rect x="5.8" y="0.9" width="8" height="5.4" fill="#f0f8ff" stroke="#646880" stroke-width="1"/>
<rect x="9" y="2" width="4.3" height="3.8" fill="#78d0ee"/>
<path d="M7 5.5 L9.5 2.5 M8 5.8 L10.5 3" stroke="#ffffff" stroke-width="0.5" opacity="0.7"/>
<path d="M2.2 0 L3.2 3.4 Q3.8 5.0 6.0 5.3" stroke="#6252c8" stroke-width="1.8" fill="none"/>
<path d="M5.0 3.2 L7.8 5.1 L5.0 7.2 Z" fill="#9c8cf0"/>
</svg>
<div class="gt sx" style="left:47.6px;top:336.5px">Sector 2 Casa 19</div>
<div class="gt" style="left:200.0px;top:336.5px">1/1/2011</div>
<div class="gt" style="left:279.0px;top:336.5px">3/1/2011</div>
<div class="gt r" style="left:352.5px;width:65.5px;top:336.5px">0.00</div>
<div class="gt r" style="left:420.5px;width:72.80000000000001px;top:336.5px">930.00</div>
<div class="gt r" style="left:495.8px;width:72.09999999999997px;top:336.5px">0.00</div>
<div class="gt r" style="left:570.4px;width:72.10000000000002px;top:336.5px">930.00</div>
<svg class="a" style="left:19.0px;top:351.9px" width="15" height="8" viewBox="0 0 15 8">
<rect x="5.8" y="0.9" width="8" height="5.4" fill="#f0f8ff" stroke="#646880" stroke-width="1"/>
<rect x="9" y="2" width="4.3" height="3.8" fill="#78d0ee"/>
<path d="M7 5.5 L9.5 2.5 M8 5.8 L10.5 3" stroke="#ffffff" stroke-width="0.5" opacity="0.7"/>
<path d="M2.2 0 L3.2 3.4 Q3.8 5.0 6.0 5.3" stroke="#6252c8" stroke-width="1.8" fill="none"/>
<path d="M5.0 3.2 L7.8 5.1 L5.0 7.2 Z" fill="#9c8cf0"/>
</svg>
<div class="gt sx" style="left:47.6px;top:350.0px">Sector 2 Casa 16</div>
<div class="gt" style="left:200.0px;top:350.0px">1/1/2011</div>
<div class="gt" style="left:279.0px;top:350.0px">3/1/2011</div>
<div class="gt r" style="left:352.5px;width:65.5px;top:350.0px">0.00</div>
<div class="gt r" style="left:420.5px;width:72.80000000000001px;top:350.0px">930.00</div>
<div class="gt r" style="left:495.8px;width:72.09999999999997px;top:350.0px">0.00</div>
<div class="gt r" style="left:570.4px;width:72.10000000000002px;top:350.0px">930.00</div>
<svg class="a" style="left:19.0px;top:365.4px" width="15" height="8" viewBox="0 0 15 8">
<rect x="5.8" y="0.9" width="8" height="5.4" fill="#f0f8ff" stroke="#646880" stroke-width="1"/>
<rect x="9" y="2" width="4.3" height="3.8" fill="#78d0ee"/>
<path d="M7 5.5 L9.5 2.5 M8 5.8 L10.5 3" stroke="#ffffff" stroke-width="0.5" opacity="0.7"/>
<path d="M2.2 0 L3.2 3.4 Q3.8 5.0 6.0 5.3" stroke="#6252c8" stroke-width="1.8" fill="none"/>
<path d="M5.0 3.2 L7.8 5.1 L5.0 7.2 Z" fill="#9c8cf0"/>
</svg>
<div class="gt sx" style="left:47.6px;top:363.5px">Sector 2 Casa 17</div>
<div class="gt" style="left:200.0px;top:363.5px">1/1/2011</div>
<div class="gt" style="left:279.0px;top:363.5px">3/1/2011</div>
<div class="gt r" style="left:352.5px;width:65.5px;top:363.5px">0.00</div>
<div class="gt r" style="left:420.5px;width:72.80000000000001px;top:363.5px">930.00</div>
<div class="gt r" style="left:495.8px;width:72.09999999999997px;top:363.5px">0.00</div>
<div class="gt r" style="left:570.4px;width:72.10000000000002px;top:363.5px">930.00</div>
<svg class="a" style="left:19.0px;top:378.9px" width="15" height="8" viewBox="0 0 15 8">
<rect x="5.8" y="0.9" width="8" height="5.4" fill="#f0f8ff" stroke="#646880" stroke-width="1"/>
<rect x="9" y="2" width="4.3" height="3.8" fill="#78d0ee"/>
<path d="M7 5.5 L9.5 2.5 M8 5.8 L10.5 3" stroke="#ffffff" stroke-width="0.5" opacity="0.7"/>
<path d="M2.2 0 L3.2 3.4 Q3.8 5.0 6.0 5.3" stroke="#6252c8" stroke-width="1.8" fill="none"/>
<path d="M5.0 3.2 L7.8 5.1 L5.0 7.2 Z" fill="#9c8cf0"/>
</svg>
<div class="gt sx" style="left:47.6px;top:377.0px">Sector 2 Casa 18</div>
<div class="gt" style="left:200.0px;top:377.0px">1/1/2011</div>
<div class="gt" style="left:279.0px;top:377.0px">3/1/2011</div>
<div class="gt r" style="left:352.5px;width:65.5px;top:377.0px">0.00</div>
<div class="gt r" style="left:420.5px;width:72.80000000000001px;top:377.0px">930.00</div>
<div class="gt r" style="left:495.8px;width:72.09999999999997px;top:377.0px">0.00</div>
<div class="gt r" style="left:570.4px;width:72.10000000000002px;top:377.0px">930.00</div>
<svg class="a" style="left:19.0px;top:392.4px" width="15" height="8" viewBox="0 0 15 8">
<rect x="5.8" y="0.9" width="8" height="5.4" fill="#f0f8ff" stroke="#646880" stroke-width="1"/>
<rect x="9" y="2" width="4.3" height="3.8" fill="#78d0ee"/>
<path d="M7 5.5 L9.5 2.5 M8 5.8 L10.5 3" stroke="#ffffff" stroke-width="0.5" opacity="0.7"/>
<path d="M2.2 0 L3.2 3.4 Q3.8 5.0 6.0 5.3" stroke="#6252c8" stroke-width="1.8" fill="none"/>
<path d="M5.0 3.2 L7.8 5.1 L5.0 7.2 Z" fill="#9c8cf0"/>
</svg>
<div class="gt sx" style="left:47.6px;top:390.5px">Sector 4 Casa 1</div>
<div class="gt" style="left:200.0px;top:390.5px">1/1/2011</div>
<div class="gt" style="left:279.0px;top:390.5px">3/1/2011</div>
<div class="gt r" style="left:352.5px;width:65.5px;top:390.5px">0.00</div>
<div class="gt r" style="left:420.5px;width:72.80000000000001px;top:390.5px">620.00</div>
<div class="gt r" style="left:495.8px;width:72.09999999999997px;top:390.5px">285.00</div>
<div class="gt r" style="left:570.4px;width:72.10000000000002px;top:390.5px">335.00</div>
<svg class="a" style="left:19.0px;top:405.9px" width="15" height="8" viewBox="0 0 15 8">
<rect x="5.8" y="0.9" width="8" height="5.4" fill="#f0f8ff" stroke="#646880" stroke-width="1"/>
<rect x="9" y="2" width="4.3" height="3.8" fill="#78d0ee"/>
<path d="M7 5.5 L9.5 2.5 M8 5.8 L10.5 3" stroke="#ffffff" stroke-width="0.5" opacity="0.7"/>
<path d="M2.2 0 L3.2 3.4 Q3.8 5.0 6.0 5.3" stroke="#6252c8" stroke-width="1.8" fill="none"/>
<path d="M5.0 3.2 L7.8 5.1 L5.0 7.2 Z" fill="#9c8cf0"/>
</svg>
<div class="gt sx" style="left:47.6px;top:404.0px">Sector 2 Casa 20</div>
<div class="gt" style="left:200.0px;top:404.0px">1/1/2011</div>
<div class="gt" style="left:279.0px;top:404.0px">3/1/2011</div>
<div class="gt r" style="left:352.5px;width:65.5px;top:404.0px">0.00</div>
<div class="gt r" style="left:420.5px;width:72.80000000000001px;top:404.0px">555.00</div>
<div class="gt r" style="left:495.8px;width:72.09999999999997px;top:404.0px">0.00</div>
<div class="gt r" style="left:570.4px;width:72.10000000000002px;top:404.0px">555.00</div>
<svg class="a" style="left:19.0px;top:419.4px" width="15" height="8" viewBox="0 0 15 8">
<rect x="5.8" y="0.9" width="8" height="5.4" fill="#f0f8ff" stroke="#646880" stroke-width="1"/>
<rect x="9" y="2" width="4.3" height="3.8" fill="#78d0ee"/>
<path d="M7 5.5 L9.5 2.5 M8 5.8 L10.5 3" stroke="#ffffff" stroke-width="0.5" opacity="0.7"/>
<path d="M2.2 0 L3.2 3.4 Q3.8 5.0 6.0 5.3" stroke="#6252c8" stroke-width="1.8" fill="none"/>
<path d="M5.0 3.2 L7.8 5.1 L5.0 7.2 Z" fill="#9c8cf0"/>
</svg>
<div class="gt sx" style="left:47.6px;top:417.5px">Sector 3 Casa 21</div>
<div class="gt" style="left:200.0px;top:417.5px">1/1/2011</div>
<div class="gt" style="left:279.0px;top:417.5px">3/1/2011</div>
<div class="gt r" style="left:352.5px;width:65.5px;top:417.5px">0.00</div>
<div class="gt r" style="left:420.5px;width:72.80000000000001px;top:417.5px">930.00</div>
<div class="gt r" style="left:495.8px;width:72.09999999999997px;top:417.5px">0.00</div>
<div class="gt r" style="left:570.4px;width:72.10000000000002px;top:417.5px">930.00</div>
<svg class="a" style="left:19.0px;top:432.9px" width="15" height="8" viewBox="0 0 15 8">
<rect x="5.8" y="0.9" width="8" height="5.4" fill="#f0f8ff" stroke="#646880" stroke-width="1"/>
<rect x="9" y="2" width="4.3" height="3.8" fill="#78d0ee"/>
<path d="M7 5.5 L9.5 2.5 M8 5.8 L10.5 3" stroke="#ffffff" stroke-width="0.5" opacity="0.7"/>
<path d="M2.2 0 L3.2 3.4 Q3.8 5.0 6.0 5.3" stroke="#6252c8" stroke-width="1.8" fill="none"/>
<path d="M5.0 3.2 L7.8 5.1 L5.0 7.2 Z" fill="#9c8cf0"/>
</svg>
<div class="gt sx" style="left:47.6px;top:431.0px">Sector 3 Casa 22</div>
<div class="gt" style="left:200.0px;top:431.0px">1/1/2011</div>
<div class="gt" style="left:279.0px;top:431.0px">3/1/2011</div>
<div class="gt r" style="left:352.5px;width:65.5px;top:431.0px">0.00</div>
<div class="gt r" style="left:420.5px;width:72.80000000000001px;top:431.0px">930.00</div>
<div class="gt r" style="left:495.8px;width:72.09999999999997px;top:431.0px">0.00</div>
<div class="gt r" style="left:570.4px;width:72.10000000000002px;top:431.0px">930.00</div>
<svg class="a" style="left:19.0px;top:446.4px" width="15" height="8" viewBox="0 0 15 8">
<rect x="5.8" y="0.9" width="8" height="5.4" fill="#f0f8ff" stroke="#646880" stroke-width="1"/>
<rect x="9" y="2" width="4.3" height="3.8" fill="#78d0ee"/>
<path d="M7 5.5 L9.5 2.5 M8 5.8 L10.5 3" stroke="#ffffff" stroke-width="0.5" opacity="0.7"/>
<path d="M2.2 0 L3.2 3.4 Q3.8 5.0 6.0 5.3" stroke="#6252c8" stroke-width="1.8" fill="none"/>
<path d="M5.0 3.2 L7.8 5.1 L5.0 7.2 Z" fill="#9c8cf0"/>
</svg>
<div class="gt sx" style="left:47.6px;top:444.5px">Sector 3 Casa 23</div>
<div class="gt" style="left:200.0px;top:444.5px">1/1/2011</div>
<div class="gt" style="left:279.0px;top:444.5px">3/1/2011</div>
<div class="gt r" style="left:352.5px;width:65.5px;top:444.5px">0.00</div>
<div class="gt r" style="left:420.5px;width:72.80000000000001px;top:444.5px">930.00</div>
<div class="gt r" style="left:495.8px;width:72.09999999999997px;top:444.5px">0.00</div>
<div class="gt r" style="left:570.4px;width:72.10000000000002px;top:444.5px">930.00</div>
<svg class="a" style="left:19.0px;top:459.9px" width="15" height="8" viewBox="0 0 15 8">
<rect x="5.8" y="0.9" width="8" height="5.4" fill="#f0f8ff" stroke="#646880" stroke-width="1"/>
<rect x="9" y="2" width="4.3" height="3.8" fill="#78d0ee"/>
<path d="M7 5.5 L9.5 2.5 M8 5.8 L10.5 3" stroke="#ffffff" stroke-width="0.5" opacity="0.7"/>
<path d="M2.2 0 L3.2 3.4 Q3.8 5.0 6.0 5.3" stroke="#6252c8" stroke-width="1.8" fill="none"/>
<path d="M5.0 3.2 L7.8 5.1 L5.0 7.2 Z" fill="#9c8cf0"/>
</svg>
<div class="gt sx" style="left:47.6px;top:458.0px">Sector 3 Casa 24</div>
<div class="gt" style="left:200.0px;top:458.0px">1/1/2011</div>
<div class="gt" style="left:279.0px;top:458.0px">3/1/2011</div>
<div class="gt r" style="left:352.5px;width:65.5px;top:458.0px">0.00</div>
<div class="gt r" style="left:420.5px;width:72.80000000000001px;top:458.0px">930.00</div>
<div class="gt r" style="left:495.8px;width:72.09999999999997px;top:458.0px">0.00</div>
<div class="gt r" style="left:570.4px;width:72.10000000000002px;top:458.0px">930.00</div>
<svg class="a" style="left:19.0px;top:473.4px" width="15" height="8" viewBox="0 0 15 8">
<rect x="5.8" y="0.9" width="8" height="5.4" fill="#f0f8ff" stroke="#646880" stroke-width="1"/>
<rect x="9" y="2" width="4.3" height="3.8" fill="#78d0ee"/>
<path d="M7 5.5 L9.5 2.5 M8 5.8 L10.5 3" stroke="#ffffff" stroke-width="0.5" opacity="0.7"/>
<path d="M2.2 0 L3.2 3.4 Q3.8 5.0 6.0 5.3" stroke="#6252c8" stroke-width="1.8" fill="none"/>
<path d="M5.0 3.2 L7.8 5.1 L5.0 7.2 Z" fill="#9c8cf0"/>
</svg>
<div class="gt sx" style="left:47.6px;top:471.5px">Sector 3 Casa 25</div>
<div class="gt" style="left:200.0px;top:471.5px">1/1/2011</div>
<div class="gt" style="left:279.0px;top:471.5px">3/1/2011</div>
<div class="gt r" style="left:352.5px;width:65.5px;top:471.5px">0.00</div>
<div class="gt r" style="left:420.5px;width:72.80000000000001px;top:471.5px">930.00</div>
<div class="gt r" style="left:495.8px;width:72.09999999999997px;top:471.5px">0.00</div>
<div class="gt r" style="left:570.4px;width:72.10000000000002px;top:471.5px">930.00</div>
<svg class="a" style="left:19.0px;top:486.9px" width="15" height="8" viewBox="0 0 15 8">
<rect x="5.8" y="0.9" width="8" height="5.4" fill="#f0f8ff" stroke="#646880" stroke-width="1"/>
<rect x="9" y="2" width="4.3" height="3.8" fill="#78d0ee"/>
<path d="M7 5.5 L9.5 2.5 M8 5.8 L10.5 3" stroke="#ffffff" stroke-width="0.5" opacity="0.7"/>
<path d="M2.2 0 L3.2 3.4 Q3.8 5.0 6.0 5.3" stroke="#6252c8" stroke-width="1.8" fill="none"/>
<path d="M5.0 3.2 L7.8 5.1 L5.0 7.2 Z" fill="#9c8cf0"/>
</svg>
<div class="gt sx" style="left:47.6px;top:485.0px">Sector 3 Casa 26</div>
<div class="gt" style="left:200.0px;top:485.0px">1/1/2011</div>
<div class="gt" style="left:279.0px;top:485.0px">3/1/2011</div>
<div class="gt r" style="left:352.5px;width:65.5px;top:485.0px">0.00</div>
<div class="gt r" style="left:420.5px;width:72.80000000000001px;top:485.0px">930.00</div>
<div class="gt r" style="left:495.8px;width:72.09999999999997px;top:485.0px">0.00</div>
<div class="gt r" style="left:570.4px;width:72.10000000000002px;top:485.0px">930.00</div>
<svg class="a" style="left:19.0px;top:500.4px" width="15" height="8" viewBox="0 0 15 8">
<rect x="5.8" y="0.9" width="8" height="5.4" fill="#f0f8ff" stroke="#646880" stroke-width="1"/>
<rect x="9" y="2" width="4.3" height="3.8" fill="#78d0ee"/>
<path d="M7 5.5 L9.5 2.5 M8 5.8 L10.5 3" stroke="#ffffff" stroke-width="0.5" opacity="0.7"/>
<path d="M2.2 0 L3.2 3.4 Q3.8 5.0 6.0 5.3" stroke="#6252c8" stroke-width="1.8" fill="none"/>
<path d="M5.0 3.2 L7.8 5.1 L5.0 7.2 Z" fill="#9c8cf0"/>
</svg>
<div class="gt sx" style="left:47.6px;top:498.5px">Sector 3 Casa 27</div>
<div class="gt" style="left:200.0px;top:498.5px">1/1/2011</div>
<div class="gt" style="left:279.0px;top:498.5px">3/1/2011</div>
<div class="gt r" style="left:352.5px;width:65.5px;top:498.5px">0.00</div>
<div class="gt r" style="left:420.5px;width:72.80000000000001px;top:498.5px">555.00</div>
<div class="gt r" style="left:495.8px;width:72.09999999999997px;top:498.5px">0.00</div>
<div class="gt r" style="left:570.4px;width:72.10000000000002px;top:498.5px">555.00</div>
<svg class="a" style="left:19.0px;top:513.9px" width="15" height="8" viewBox="0 0 15 8">
<rect x="5.8" y="0.9" width="8" height="5.4" fill="#f0f8ff" stroke="#646880" stroke-width="1"/>
<rect x="9" y="2" width="4.3" height="3.8" fill="#78d0ee"/>
<path d="M7 5.5 L9.5 2.5 M8 5.8 L10.5 3" stroke="#ffffff" stroke-width="0.5" opacity="0.7"/>
<path d="M2.2 0 L3.2 3.4 Q3.8 5.0 6.0 5.3" stroke="#6252c8" stroke-width="1.8" fill="none"/>
<path d="M5.0 3.2 L7.8 5.1 L5.0 7.2 Z" fill="#9c8cf0"/>
</svg>
<div class="gt sx" style="left:47.6px;top:512.0px">Sector 3 Casa 28</div>
<div class="gt" style="left:200.0px;top:512.0px">1/1/2011</div>
<div class="gt" style="left:279.0px;top:512.0px">3/1/2011</div>
<div class="gt r" style="left:352.5px;width:65.5px;top:512.0px">0.00</div>
<div class="gt r" style="left:420.5px;width:72.80000000000001px;top:512.0px">555.00</div>
<div class="gt r" style="left:495.8px;width:72.09999999999997px;top:512.0px">0.00</div>
<div class="gt r" style="left:570.4px;width:72.10000000000002px;top:512.0px">555.00</div>
<svg class="a" style="left:19.0px;top:527.4px" width="15" height="8" viewBox="0 0 15 8">
<rect x="5.8" y="0.9" width="8" height="5.4" fill="#f0f8ff" stroke="#646880" stroke-width="1"/>
<rect x="9" y="2" width="4.3" height="3.8" fill="#78d0ee"/>
<path d="M7 5.5 L9.5 2.5 M8 5.8 L10.5 3" stroke="#ffffff" stroke-width="0.5" opacity="0.7"/>
<path d="M2.2 0 L3.2 3.4 Q3.8 5.0 6.0 5.3" stroke="#6252c8" stroke-width="1.8" fill="none"/>
<path d="M5.0 3.2 L7.8 5.1 L5.0 7.2 Z" fill="#9c8cf0"/>
</svg>
<div class="gt sx" style="left:47.6px;top:525.5px">Sector 3 Casa 29</div>
<div class="gt" style="left:200.0px;top:525.5px">1/1/2011</div>
<div class="gt" style="left:279.0px;top:525.5px">3/1/2011</div>
<div class="gt r" style="left:352.5px;width:65.5px;top:525.5px">0.00</div>
<div class="gt r" style="left:420.5px;width:72.80000000000001px;top:525.5px">930.00</div>
<div class="gt r" style="left:495.8px;width:72.09999999999997px;top:525.5px">0.00</div>
<div class="gt r" style="left:570.4px;width:72.10000000000002px;top:525.5px">930.00</div>
<svg class="a" style="left:19.0px;top:540.9px" width="15" height="8" viewBox="0 0 15 8">
<rect x="5.8" y="0.9" width="8" height="5.4" fill="#f0f8ff" stroke="#646880" stroke-width="1"/>
<rect x="9" y="2" width="4.3" height="3.8" fill="#78d0ee"/>
<path d="M7 5.5 L9.5 2.5 M8 5.8 L10.5 3" stroke="#ffffff" stroke-width="0.5" opacity="0.7"/>
<path d="M2.2 0 L3.2 3.4 Q3.8 5.0 6.0 5.3" stroke="#6252c8" stroke-width="1.8" fill="none"/>
<path d="M5.0 3.2 L7.8 5.1 L5.0 7.2 Z" fill="#9c8cf0"/>
</svg>
<div class="gt sx" style="left:47.6px;top:539.0px">Sector 3 Casa 30</div>
<div class="gt" style="left:200.0px;top:539.0px">1/1/2011</div>
<div class="gt" style="left:279.0px;top:539.0px">3/1/2011</div>
<div class="gt r" style="left:352.5px;width:65.5px;top:539.0px">0.00</div>
<div class="gt r" style="left:420.5px;width:72.80000000000001px;top:539.0px">930.00</div>
<div class="gt r" style="left:495.8px;width:72.09999999999997px;top:539.0px">400.00</div>
<div class="gt r" style="left:570.4px;width:72.10000000000002px;top:539.0px">530.00</div>
<div class="a" style="left:8px;top:547.4px;width:744px;height:2px;background:#eef2f8"></div>
<div class="a" style="left:752px;top:119px;width:14px;height:430px;background:linear-gradient(90deg,#e8ecf2 0%,#f4f6f8 50%,#e8ecf2 100%)"></div>
<svg class="a" style="left:755.5px;top:123px" width="7" height="3.5" viewBox="0 0 7 3.5"><path d="M0 3.5 L3.5 0 L7 3.5 Z" fill="#3a4262"/></svg>
<svg class="a" style="left:755.5px;top:540px" width="7" height="3.5" viewBox="0 0 7 3.5"><path d="M0 0 L7 0 L3.5 3.5 Z" fill="#3a4262"/></svg>
<div class="a" style="left:753.5px;top:132.3px;width:11.5px;height:389px;border:1px solid #8a92a0;border-radius:1.5px;background:linear-gradient(90deg,#dde1e8 0%,#eef0f4 30%,#d0d8e4 70%,#c0c8d8 100%)"></div>
<div class="a" style="left:756.5px;top:324px;width:5px;height:1px;background:#7a8290"></div>
<div class="a" style="left:756.5px;top:326px;width:5px;height:1px;background:#7a8290"></div>
<div class="a" style="left:756.5px;top:328px;width:5px;height:1px;background:#7a8290"></div>

<div class="a" style="left:7px;top:549px;width:760px;height:17px;background:linear-gradient(180deg,#e6f0fc 0%,#d4e4f8 40%,#c4d9f4 60%,#d8e7fa 100%);border-top:1px solid #8aa6cc"></div>
<div class="a" style="left:234px;top:550px;width:1px;height:16px;background:#a8bcd8"></div>
<div class="a" style="left:579px;top:550px;width:1px;height:16px;background:#a8bcd8"></div>
<div class="t" style="left:20.48px;top:554px;font-size:8.5px;color:#2a4a88;transform:scaleX(0.949);">localhost:multidomus</div>
<div class="t" style="left:249.40px;top:554px;font-size:8.3px;color:#2a4a88;transform:scaleX(0.900);">MENRIQUEZ</div>
<svg class="a" style="left:7px;top:551px" width="12" height="12" viewBox="0 0 12 12">
<path d="M1 1 L5 2 L7 5 L4 7 L1.5 4 Z" fill="#f0c020" stroke="#b08010" stroke-width="0.5"/>
<path d="M5 5 L8 4 L10.5 7.5 L9 10 L6 9 Z" fill="#2a6ad8" stroke="#1a3a90" stroke-width="0.5"/>
<circle cx="10.5" cy="10.5" r="1.3" fill="#1a4ab8"/>
</svg>
<svg class="a" style="left:237px;top:551px" width="11" height="13" viewBox="0 0 11 13">
<path d="M0.5 12.5 Q0.5 7.5 5.5 7.5 Q10.5 7.5 10.5 12.5 Z" fill="#2a6ad8"/>
<circle cx="5.5" cy="4.2" r="3.6" fill="#f09020"/>
<circle cx="4.5" cy="3.2" r="1.5" fill="#ffd080" opacity="0.7"/>
</svg>
<div class="a" style="left:753px;top:550px;width:14px;height:16px;background:linear-gradient(180deg,#a4c0ea 0%,#88a8dc 50%,#7c9cd4 100%)"></div>
<svg class="a" style="left:756px;top:553px" width="10" height="11" viewBox="0 0 10 11">
<g fill="#6a80b0"><rect x="7.5" y="2.5" width="1.6" height="1.6"/><rect x="4.5" y="5.5" width="1.6" height="1.6"/><rect x="7.5" y="5.5" width="1.6" height="1.6"/><rect x="1.5" y="8.5" width="1.6" height="1.6"/><rect x="4.5" y="8.5" width="1.6" height="1.6"/><rect x="7.5" y="8.5" width="1.6" height="1.6"/></g>
<g fill="#f0f6ff"><rect x="7" y="2" width="1.6" height="1.6"/><rect x="4" y="5" width="1.6" height="1.6"/><rect x="7" y="5" width="1.6" height="1.6"/><rect x="1" y="8" width="1.6" height="1.6"/><rect x="4" y="8" width="1.6" height="1.6"/><rect x="7" y="8" width="1.6" height="1.6"/></g>
</svg>
<div class="a" style="left:6px;top:566px;width:762px;height:1px;background:#4a5068"></div>
<div class="a" style="left:1px;top:567px;width:770px;height:4px;border-radius:0 0 3px 0;background:linear-gradient(90deg,#3a3e4a 0%,#40444f 40%,#5a6278 75%,#8a94ae 100%)"></div>
<div class="a" style="left:0px;top:571px;width:773px;height:2px;background:#262a34"></div>
<div class="a" style="left:13px;top:7px;width:26.7px;height:27px;border-radius:50%;background:radial-gradient(circle at 50% 40%,#ffffff 0%,#eef0f2 52%,#c2c8d0 80%,#98a0ac 100%);box-shadow:0 0 0 0.7px #8a92a0"></div>
<svg class="a" style="left:18px;top:11px" width="15" height="17" viewBox="0 0 15 17">
<defs><linearGradient id="gf" x1="0" y1="0" x2="1" y2="1"><stop offset="0" stop-color="#8cc850"/><stop offset="0.45" stop-color="#3e8e28"/><stop offset="1" stop-color="#0e5416"/></linearGradient></defs>
<path d="M1 1 L13.8 3.8 L13.8 13.3 L1 15.8 Z" fill="url(#gf)"/>
<path d="M0.9 1 L3 1.3 L3 15.5 L0.9 15.8 Z" fill="#467a28"/><path d="M0.9 1 L1.8 1.1 L1.8 15.7 L0.9 15.8 Z" fill="#2a5418"/>
<path d="M4 14.7 L9.3 7.7 L13.2 12.4" stroke="#f4fff0" stroke-width="1.4" fill="none"/>
</svg>
</body></html>
